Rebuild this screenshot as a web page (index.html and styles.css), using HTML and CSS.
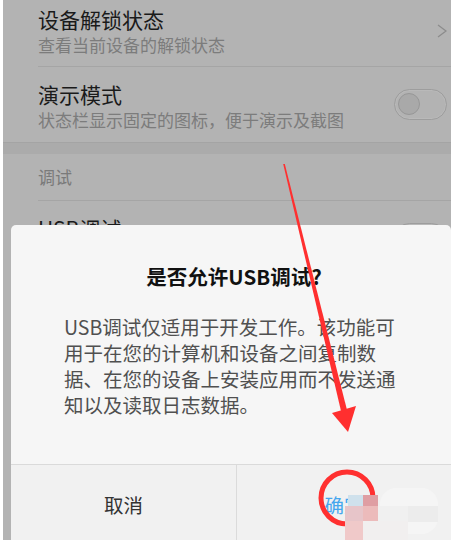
FILE: index.html
```html
<html>
  <head>
    <link rel="stylesheet" href="styles.css">
  </head>
  <body>
    <div class="screen">
      <div class="list">
        <div class="row line">
          <div class="row-text">
            <div class="row-title">设备解锁状态</div>
            <div class="row-sub">查看当前设备的解锁状态</div>
          </div>
          <svg class="chevron" width="10" height="14" viewBox="0 0 10 14">
            <path d="M1 1 L9 7 L1 13" />
          </svg>
        </div>
        <div class="row">
          <div class="row-text">
            <div class="row-title">演示模式</div>
            <div class="row-sub">状态栏显示固定的图标，便于演示及截图</div>
          </div>
          <div class="toggle"><span class="knob"></span></div>
        </div>
        <div class="section-gap"></div>
        <div class="section-head">调试</div>
        <div class="row">
          <div class="row-text">
            <div class="row-title">USB调试</div>
            <div class="row-sub">连接USB后启用调试模式</div>
          </div>
          <div class="toggle"><span class="knob"></span></div>
        </div>
      </div>

      <div class="dialog">
        <div class="dialog-content">
          <div class="dialog-title">是否允许USB调试?</div>
          <div class="dialog-body">
            <div>USB调试仅适用于开发工作。该功能可</div>
            <div>用于在您的计算机和设备之间复制数</div>
            <div>据、在您的设备上安装应用而不发送通</div>
            <div>知以及读取日志数据。</div>
          </div>
        </div>
        <div class="dialog-buttons">
          <div class="btn cancel">取消</div>
          <div class="btn ok">确定</div>
        </div>
      </div>

      <!-- red annotation drawn over the screenshot -->
      <svg class="marks" width="458" height="540" viewBox="0 0 458 540">
        <polygon class="red" points="283.2,164 284.8,164 347,410 341,411" />
        <polygon class="red" points="332,413 356,406 348,432" />
        <circle cx="347" cy="498" r="26" fill="none" stroke="#ff3030" stroke-width="5" />
        <rect x="380" y="488" width="58" height="46" rx="16" fill="#f5f5f5" />
        <rect x="408" y="506" width="30" height="16" fill="#ececec" />
        <rect x="348" y="495" width="15" height="11" fill="#cfe1ec" />
        <rect x="363" y="495" width="15" height="11" fill="#df9ea3" />
        <rect x="345" y="506" width="18" height="15" fill="#e7c5c9" />
        <rect x="363" y="506" width="15" height="15" fill="#ecbbbb" />
        <rect x="378" y="506" width="30" height="15" fill="#f0f0f0" />
        <rect x="345" y="521" width="18" height="19" fill="#f0c9c9" />
        <rect x="363" y="521" width="45" height="19" fill="#f1efef" />
      </svg>
    </div>
  </body>
</html>
```

FILE: styles.css
```css
body {
  margin: 0;
  background: #ffffff;
  font-family: "Noto Sans CJK SC", "Noto Sans", sans-serif;
}

.screen {
  position: relative;
  margin-left: 3px;
  width: 448px;
  height: 540px;
  overflow: hidden;
  background: #b3b3b3;
}

.list {
  margin-top: -8px;
}

.row {
  display: flex;
  align-items: center;
  justify-content: space-between;
  box-sizing: border-box;
  height: 75px;
  padding: 3px 4px 0 0;
  margin-left: 35px;
}
.row.line {
  border-bottom: 1px solid #a5a5a5;
}

.row-title {
  font-size: 21px;
  line-height: 26px;
  color: #1a1a1a;
}
.row-sub {
  margin-top: 2px;
  font-size: 17px;
  line-height: 22px;
  color: #7c7c7c;
}

.chevron path {
  fill: none;
  stroke: #8c8c8c;
  stroke-width: 1.3;
}

.toggle {
  box-sizing: border-box;
  width: 53px;
  height: 31px;
  margin-top: -3px;
  padding: 3px;
  border: 1px solid #9d9d9d;
  border-radius: 16px;
  box-shadow: inset 0 0 0 1px #b9b9b9;
}
.knob {
  display: block;
  box-sizing: border-box;
  width: 22px;
  height: 22px;
  border-radius: 50%;
  background: #a9a9a9;
  border: 1px solid #979797;
}

.section-gap {
  height: 11px;
  background: #ababab;
  border-top: 1px solid #a4a4a4;
}

.section-head {
  box-sizing: border-box;
  height: 47px;
  line-height: 46px;
  margin-left: 35px;
  font-size: 17px;
  color: #7a7a7a;
  border-bottom: 1px solid #a5a5a5;
}

/* dialog */
.dialog {
  position: absolute;
  left: 8px;
  top: 225px;
  width: 440px;
  border-radius: 5px 5px 0 0;
  background: #f6f6f6;
  overflow: hidden;
}
.dialog-content {
  box-sizing: border-box;
  height: 239px;
  padding-top: 37px;
}
.dialog-title {
  padding-left: 6px;
  text-align: center;
  font-size: 20.5px;
  line-height: 28px;
  font-weight: 700;
  color: #111111;
}
.dialog-body {
  margin-top: 24px;
  padding-left: 53px;
  font-size: 19.5px;
  line-height: 26px;
  color: #505050;
}

.dialog-buttons {
  display: grid;
  grid-template-columns: 226px 1fr;
  height: 80px;
  border-top: 1px solid #dadada;
  background: #f1f1f1;
}
.btn {
  text-align: center;
  line-height: 80px;
  font-size: 19.5px;
}
.cancel {
  color: #333333;
  border-right: 1.5px solid #dbdbdb;
}
.ok {
  color: #45a6ee;
}

.marks {
  position: absolute;
  left: -3px;
  top: 0;
}
.red {
  fill: #ff2f2f;
}
```
